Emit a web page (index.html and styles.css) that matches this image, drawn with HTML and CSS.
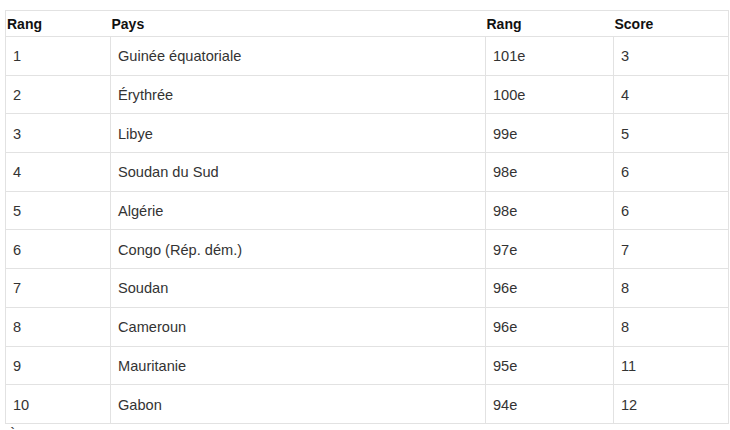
FILE: index.html
```html
<!DOCTYPE html>
<html lang="fr">
<head>
<meta charset="utf-8">
<title>Classement</title>
<link rel="stylesheet" href="styles.css">
</head>
<body>
<div class="page">
  <table class="ranking">
    <colgroup>
      <col class="c1"><col class="c2"><col class="c3"><col class="c4">
    </colgroup>
    <thead>
      <tr><th>Rang</th><th>Pays</th><th>Rang</th><th>Score</th></tr>
    </thead>
    <tbody>
      <tr><td>1</td><td>Guinée équatoriale</td><td>101e</td><td>3</td></tr>
      <tr><td>2</td><td>Érythrée</td><td>100e</td><td>4</td></tr>
      <tr><td>3</td><td>Libye</td><td>99e</td><td>5</td></tr>
      <tr><td>4</td><td>Soudan du Sud</td><td>98e</td><td>6</td></tr>
      <tr><td>5</td><td>Algérie</td><td>98e</td><td>6</td></tr>
      <tr><td>6</td><td>Congo (Rép. dém.)</td><td>97e</td><td>7</td></tr>
      <tr><td>7</td><td>Soudan</td><td>96e</td><td>8</td></tr>
      <tr><td>8</td><td>Cameroun</td><td>96e</td><td>8</td></tr>
      <tr><td>9</td><td>Mauritanie</td><td>95e</td><td>11</td></tr>
      <tr><td>10</td><td>Gabon</td><td>94e</td><td>12</td></tr>
    </tbody>
  </table>
  <p class="after">À noter</p>
</div>
</body>
</html>
```
FILE: styles.css
```css
html, body {
  margin: 0;
  padding: 0;
  background: #fff;
}
body {
  font-family: "Liberation Sans", Arial, sans-serif;
  font-size: 14px;
  color: #333;
  overflow: hidden;
}
.page {
  padding: 10px 2px 0 5px;
}
.ranking {
  width: 723px;
  border-collapse: collapse;
  border: 1px solid #e2e2e2;
  table-layout: fixed;
}
.c1 { width: 105px; }
.c2 { width: 375px; }
.c3 { width: 128px; }
.c4 { width: 115px; }
.ranking th {
  text-align: left;
  font-weight: bold;
  color: #111;
  height: 25px;
  padding: 0 0 0 1px;
  line-height: 16px;
  border-bottom: 1px solid #e2e2e2;
}
.ranking td {
  padding: 11px 7px 10px;
  height: 16.7px;
  line-height: 16px;
  font-size: 14.6px;
  border: 1px solid #e2e2e2;
}
.after {
  margin: 3px 0 0 3px;
  line-height: 16px;
  color: #333;
}
```
